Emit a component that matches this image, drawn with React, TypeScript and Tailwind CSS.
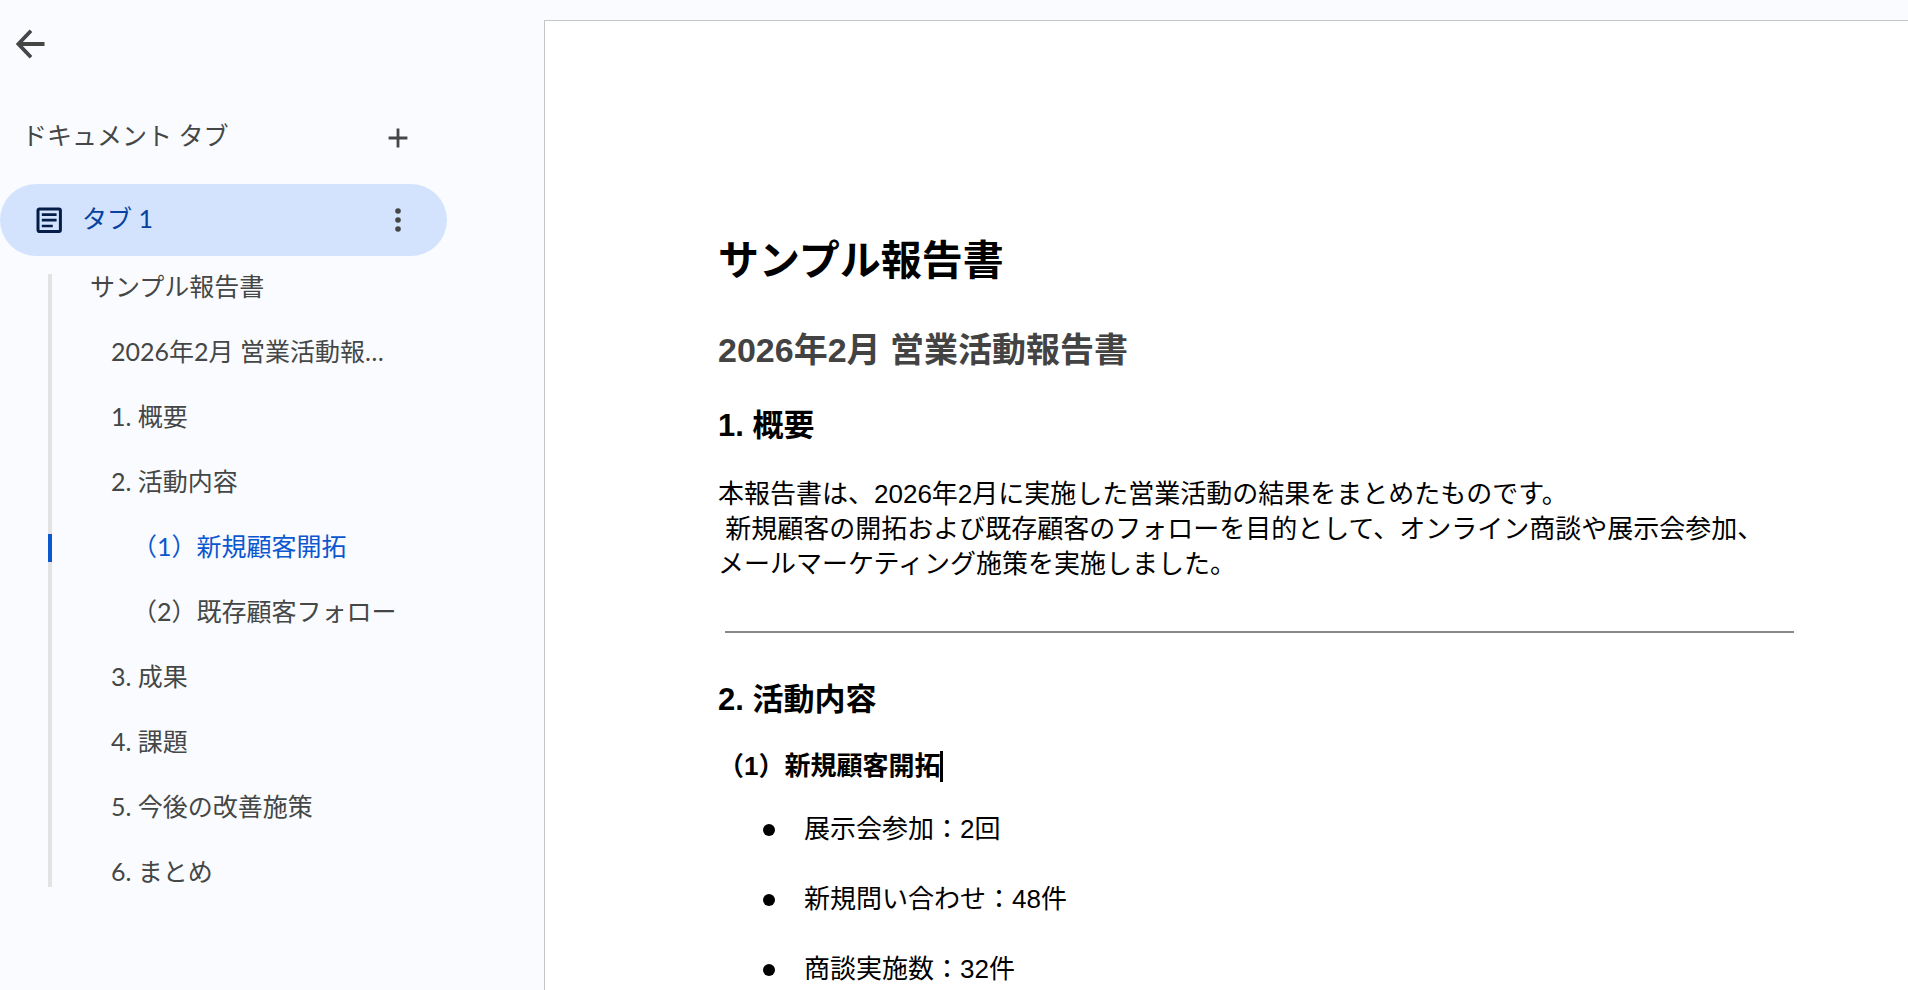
import React, { useState } from 'react';

interface OutlineItem {
  id: string;
  label: string;
  level: 1 | 2 | 3;
}

const OUTLINE: OutlineItem[] = [
  { id: 'title', label: 'サンプル報告書', level: 1 },
  { id: 'subtitle', label: '2026年2月 営業活動報告書', level: 2 },
  { id: 'overview', label: '1. 概要', level: 2 },
  { id: 'activity', label: '2. 活動内容', level: 2 },
  { id: 'new-customers', label: '（1）新規顧客開拓', level: 3 },
  { id: 'follow-up', label: '（2）既存顧客フォロー', level: 3 },
  { id: 'results', label: '3. 成果', level: 2 },
  { id: 'issues', label: '4. 課題', level: 2 },
  { id: 'improvements', label: '5. 今後の改善施策', level: 2 },
  { id: 'summary', label: '6. まとめ', level: 2 },
];

const ACTIVITIES = ['展示会参加：2回', '新規問い合わせ：48件', '商談実施数：32件'];

const LEVEL_INDENT = {
  1: 'pl-[38px]',
  2: 'pl-[59px]',
  3: 'pl-20',
};

const BackIcon = () => (
  <svg viewBox="0 0 32 32" className="size-8" fill="none" stroke="currentColor" strokeWidth="3.8">
    <path d="M30.5 16H5M17 2.8 4.4 16 17 29.2" />
  </svg>
);

const PlusIcon = () => (
  <svg viewBox="0 0 20 20" className="size-5" fill="none" stroke="currentColor" strokeWidth="2.8">
    <path d="M10 0.6v18.8M0.6 10h18.8" />
  </svg>
);

const TabIcon = () => (
  <svg viewBox="0 0 26 28" className="h-7 w-[26px]" fill="none" stroke="currentColor">
    <rect x="2" y="2.9" width="22.4" height="22.6" rx="1.4" strokeWidth="3" />
    <path d="M5.8 8.6h14.8M5.8 14.2h14.8M5.8 20h11" strokeWidth="2.7" />
  </svg>
);

const MoreIcon = () => (
  <svg viewBox="0 0 6 26" className="h-[26px] w-1.5" fill="currentColor">
    <circle cx="3" cy="4" r="2.8" />
    <circle cx="3" cy="13" r="2.8" />
    <circle cx="3" cy="22" r="2.8" />
  </svg>
);

const Sidebar: React.FC = () => {
  const [activeId, setActiveId] = useState('new-customers');

  return (
    <aside className="w-[544px] shrink-0 pr-[97px] font-[Lato,'Noto_Sans_CJK_JP',sans-serif] text-[25px] leading-9 text-[#444746]">
      <button aria-label="戻る" className="mt-7 ml-3.5 block">
        <BackIcon />
      </button>

      <div className="mt-14 flex items-end justify-between pr-[39px] pl-[22px]">
        <h2 className="pt-px">ドキュメント タブ</h2>
        <button aria-label="タブを追加" className="pb-[5px] leading-5">
          <PlusIcon />
        </button>
      </div>

      <div className="mt-[31px] flex h-[72px] items-center justify-between rounded-full bg-[#d3e3fd] pr-[46px] pl-9">
        <button className="flex items-center gap-5 text-[#0842a0]">
          <span className="text-[#041e49]">
            <TabIcon />
          </span>
          <span className="pb-1">タブ 1</span>
        </button>
        <button aria-label="タブのオプション">
          <MoreIcon />
        </button>
      </div>

      <nav className="mt-[18px] ml-12">
        <ul className="flex flex-col">
          {OUTLINE.map((item) => {
            const isActive = item.id === activeId;
            return (
              <li key={item.id} className="flex border-l-4 border-[#e3e3e3] pb-[37px] last:pb-0">
                <a
                  href={`#${item.id}`}
                  onClick={() => setActiveId(item.id)}
                  className={`-ml-1 block h-7 min-w-0 flex-1 border-l-4 pr-11 ${LEVEL_INDENT[item.level]} ${
                    isActive ? 'border-[#0b57d0] text-[#0b57d0]' : 'border-transparent'
                  }`}
                >
                  <span className="-mt-1.5 block truncate">{item.label}</span>
                </a>
              </li>
            );
          })}
        </ul>
      </nav>
    </aside>
  );
};

const Report: React.FC = () => (
  <main className="mt-5 min-w-0 flex-1 overflow-hidden border-t border-l border-[#c4c7c5] bg-white pt-[210px] pr-[114px] pl-[173px] font-['Liberation_Sans','Noto_Sans_CJK_JP',sans-serif] text-[26px] leading-[35px] text-black">
    <h1 id="title" className="text-[41px] leading-[60px] font-bold">サンプル報告書</h1>
    <h2 id="subtitle" className="mt-[34px] text-[34px] leading-[50px] font-bold text-[#434343]">
      2026年2月 営業活動報告書
    </h2>
    <h3 id="overview" className="mt-7 text-[31px] leading-[46px] font-bold">1. 概要</h3>
    <p className="mt-7 whitespace-pre-wrap">
      {'本報告書は、2026年2月に実施した営業活動の結果をまとめたものです。\n 新規顧客の開拓および既存顧客のフォローを目的として、オンライン商談や展示会参加、\nメールマーケティング施策を実施しました。'}
    </p>
    <hr className="mt-[49px] ml-[7px] border-t-2 border-[#888888]" />
    <h3 id="activity" className="mt-11 text-[31px] leading-[46px] font-bold">2. 活動内容</h3>
    <h4 id="new-customers" className="mt-[26px] flex items-center font-bold">
      （1）新規顧客開拓
      <span className="h-[31px] w-[3px] bg-black" />
    </h4>
    <ul className="mt-7 flex flex-col gap-[35px] pl-[45px]">
      {ACTIVITIES.map((activity) => (
        <li key={activity} className="flex items-center gap-[29px]">
          <span className="size-3 rounded-full bg-black" />
          {activity}
        </li>
      ))}
    </ul>
  </main>
);

const App: React.FC = () => (
  <div className="flex h-screen overflow-hidden bg-[#f9fbff]">
    <Sidebar />
    <Report />
  </div>
);

export default App;
